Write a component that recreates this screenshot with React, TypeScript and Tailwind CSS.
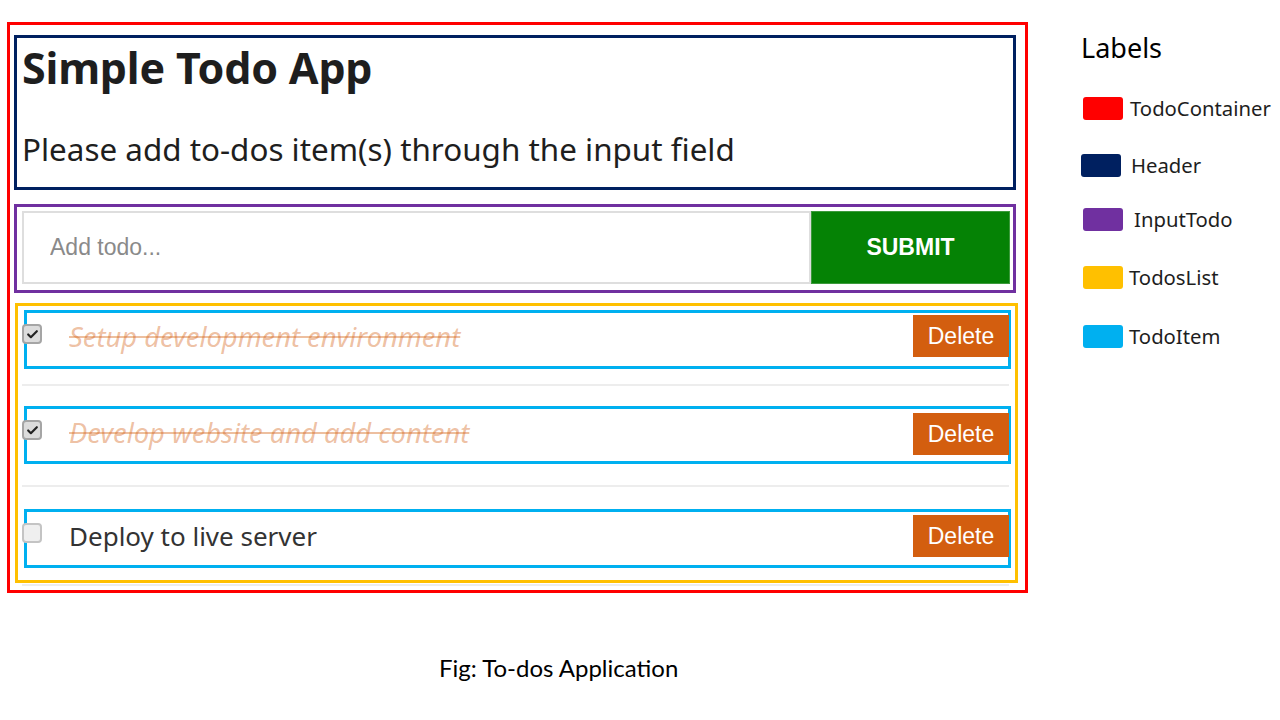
import { Check } from "lucide-react";

const todos = [
  { id: 1, title: "Setup development environment", completed: true, btn: "mt-[2px]" },
  { id: 2, title: "Develop website and add content", completed: true, btn: "mt-[4px]" },
  { id: 3, title: "Deploy to live server", completed: false, btn: "mt-[3px]" },
];

const labels = [
  { name: "TodoContainer", swatch: "bg-[#ff0000] ml-[2px]", text: "ml-[7px]", row: "mt-0" },
  { name: "Header", swatch: "bg-[#002060]", text: "ml-[10px]", row: "mt-[34px]" },
  { name: "InputTodo", swatch: "bg-[#7030a0] ml-[2px]", text: "ml-[11px]", row: "mt-[31px]" },
  { name: "TodosList", swatch: "bg-[#ffc000] ml-[2px]", text: "ml-[6px]", row: "mt-[35px]" },
  { name: "TodoItem", swatch: "bg-[#00b0f0] ml-[2px]", text: "ml-[6px]", row: "mt-[36px]" },
];

const CheckBox = ({ checked }: { checked: boolean }) => (
  <span
    className={`relative z-10 -ml-[5px] mt-[11px] flex h-[20px] w-[20px] shrink-0 items-center justify-center rounded-[4px] border-2 ${
      checked ? "border-[#a5a5a5] bg-[#dcdcdc]" : "border-[#c4c4c4] bg-[#efefef]"
    }`}
  >
    {checked && <Check className="h-[13px] w-[13px] text-[#222]" strokeWidth={4} />}
  </span>
);

const TodoItem = ({ todo, className }: { todo: (typeof todos)[number]; className: string }) => (
  <div className={`flex w-[987px] items-start border-[3px] border-[#00b0f0] ${className}`}>
    <CheckBox checked={todo.completed} />
    <span
      className={`ml-[27px] mt-[6px] leading-[36px] font-['Noto_Sans',sans-serif] ${
        todo.completed ? "text-[27.3px] italic text-[#d35e0f]/40 line-through" : "text-[26px] text-[#333]"
      }`}
    >
      {todo.title}
    </span>
    <button
      className={`-mr-[1px] ml-auto h-[42px] w-[96px] bg-[#d35e0f] text-[23px] text-white font-['Liberation_Sans',sans-serif] ${todo.btn}`}
    >
      Delete
    </button>
  </div>
);

const Divider = ({ className }: { className: string }) => (
  <div className={`h-[2px] w-[987px] bg-[#ededed] ${className}`} />
);

export default function App() {
  return (
    <div className="h-[720px] w-[1280px] overflow-hidden bg-white font-['Noto_Sans',sans-serif]">
      <div className="flex">
        {/* figure */}
        <div className="pl-[7px] pt-[22px]">
          <div className="h-[571px] w-[1021px] border-[3px] border-[#ff0000] pl-[4px] pt-[10px]">
            {/* Header */}
            <div className="h-[155px] w-[1002px] border-[3px] border-[#002060] px-[5px]">
              <h1 className="mt-[6px] text-[43px] font-bold leading-[48px] tracking-[-0.2px] text-[#1e1e1e]">
                Simple Todo App
              </h1>
              <p className="mt-[37px] text-[31.4px] leading-[40px] text-[#1e1e1e]">
                Please add to-dos item(s) through the input field
              </p>
            </div>

            {/* InputTodo */}
            <div className="mt-[14px] h-[89px] w-[1002px] border-[3px] border-[#7030a0] pl-[5px] pt-[4px]">
              <div className="flex h-[73px]">
                <input
                  className="h-[73px] w-[789px] border-2 border-[#dedede] px-[26px] text-[23px] outline-none placeholder:text-[#8a8a8a] font-['Liberation_Sans',sans-serif]"
                  placeholder="Add todo..."
                />
                <button className="h-[73px] w-[199px] border border-[#3c9a3c] bg-[#058205] text-[23px] font-bold text-white font-['Liberation_Sans',sans-serif]">
                  SUBMIT
                </button>
              </div>
            </div>

            {/* TodosList */}
            <div className="ml-[1px] mt-[10px] h-[280px] w-[1003px] border-[3px] border-[#ffc000] pl-[6px] pt-[4px]">
              <TodoItem todo={todos[0]} className="h-[59px]" />
              <Divider className="-ml-[2px] mt-[15px]" />
              <TodoItem todo={todos[1]} className="mt-[20px] h-[58px]" />
              <Divider className="-ml-[2px] mt-[21px]" />
              <TodoItem todo={todos[2]} className="mt-[22px] h-[59px]" />
            </div>
            <Divider className="ml-[8px] mt-[1px]" />
          </div>
        </div>

        {/* legend */}
        <div className="ml-[53px] pt-[30px]">
          <h2 className="text-[27px] leading-[36px] text-black">Labels</h2>
          <ul className="mt-[31px] flex flex-col">
            {labels.map((label) => (
              <li key={label.name} className={`flex h-[23px] items-center ${label.row}`}>
                <span className={`h-[23px] w-[40px] rounded-[3px] ${label.swatch}`} />
                <span className={`text-[20.3px] leading-[23px] text-[#1e1e1e] ${label.text}`}>{label.name}</span>
              </li>
            ))}
          </ul>
        </div>
      </div>

      <p className="ml-[439px] mt-[61px] text-[24px] leading-[28px] text-black font-['Lato',sans-serif]">
        Fig: To-dos Application
      </p>
    </div>
  );
}
